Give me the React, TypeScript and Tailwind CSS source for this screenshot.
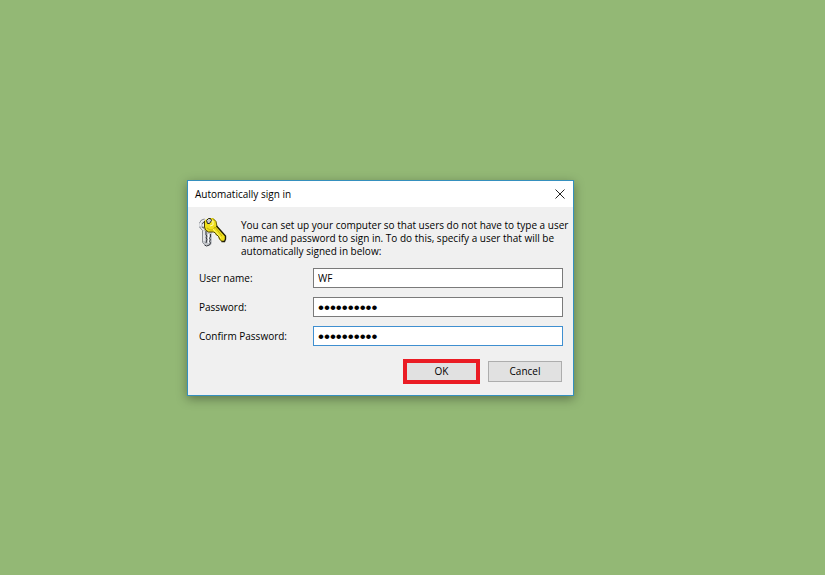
import { useState } from "react"

interface FieldProps {
  id: string
  label: string
  type?: "text" | "password"
  defaultValue: string
  active?: boolean
}

function Field({ id, label, type = "text", defaultValue, active = false }: FieldProps) {
  return (
    <div className="grid grid-cols-[114px_1fr] items-center">
      <label htmlFor={id} className="pt-0.5">
        {label}
      </label>
      <input
        id={id}
        type={type}
        defaultValue={defaultValue}
        className={`h-5 w-full border bg-white px-1 outline-none ${
          active ? "border-[#3f8fd0]" : "border-[#7a7a7a]"
        } ${type === "password" ? "pt-0.5 font-['Liberation_Sans',sans-serif] text-[17px]" : "text-[10px]"}`}
      />
    </div>
  )
}

function KeysIcon() {
  return (
    <svg width="30" height="30" viewBox="1 0 30 30" aria-hidden="true">
      {/* silver keys */}
      <path d="M6 2 3 3 1 6v4l3 3 1 1v12l2 2 3 1 3-1 1-2V14l-3-9z" fill="#c3c6cb" />
      <path d="M2 9l1-4 3-2M3 11l3 2M7 6L5 9" stroke="#f1f2f4" strokeWidth="1.4" fill="none" />
      <path d="M1.500 6l2-3 3-1M1.500 10l3 3.500v12l2 2" stroke="#8a8d93" strokeWidth="1" fill="none" />
      <path d="M4 7l2-2M4 10l2 1" stroke="#5a5d63" strokeWidth="1" fill="none" />
      <path d="M6 14v10M10.500 17v9" stroke="#f7f8fa" strokeWidth="1.2" fill="none" />
      <path d="M8 14v4l1 1-1 2 1 1-1 4M12.500 17v3l-1 1 1 2-1 1 1 2-1 2-3 1-2-1" stroke="#34373d" strokeWidth="1" fill="none" />
      {/* gold key */}
      <path d="M7 3l4-2h4l3 3 1 5 8 9v4l-1 2h-3l-2-2-1-3-2-1-1-2-2-1h-5l-3-2-1-4z" fill="#f0e01c" />
      <path d="M15 1.500l3 3 1 5" stroke="#6b5f05" strokeWidth="1" fill="none" />
      <path d="M18.500 9l9 10v3l-1 2.500h-3" stroke="#1f1c05" strokeWidth="1.4" fill="none" />
      <path d="M6.500 4v6l1 3 3 2h5l2 1 1 2 2 1 1 3 3 3" stroke="#4a4104" strokeWidth="1" fill="none" />
      <path d="M9 11l3 2h3l2-3 7 9" stroke="#c2ae0a" strokeWidth="1" fill="none" />
      <path d="M12 4h3v4l-3 1" stroke="#fffcb4" strokeWidth="1" fill="none" />
      <path d="M15 12l8 9" stroke="#fffa6a" strokeWidth="1" fill="none" />
      <path d="M8.500 3.500l2-2h2l1 2-2 3h-2z" fill="#c9cbd0" stroke="#222" strokeWidth="1" />
    </svg>
  )
}

export default function App() {
  const [open, setOpen] = useState(true)
  const close = () => setOpen(false)

  return (
    <main className="flex min-h-screen items-center justify-center bg-[#93b875] pr-16 font-['Open_Sans',sans-serif] text-[10px] leading-[13px] text-black">
      {open && (
        <section
          role="dialog"
          aria-labelledby="dialog-title"
          className="w-full max-w-[387px] border border-[#3590be] bg-[#f0f0f0] shadow-[0_3px_10px_rgba(0,0,0,0.35)]"
        >
          <header className="flex h-[26px] items-center justify-between bg-white pr-2 pl-[7px]">
            <h1 id="dialog-title" className="pt-0.5">
              Automatically sign in
            </h1>
            <button type="button" aria-label="Close" onClick={close}>
              <svg width="10" height="10" viewBox="0 0 10 10">
                <path d="M0.5 0.5l9 9M9.5 0.5l-9 9" stroke="#222" strokeWidth="1" />
              </svg>
            </button>
          </header>

          <form
            className="pt-[10px] pr-[10px] pb-[11px] pl-[11px]"
            onSubmit={(e) => {
              e.preventDefault()
              close()
            }}
          >
            <div className="-mr-2 flex gap-3">
              <div className="shrink-0">
                <KeysIcon />
              </div>
              <p className="pt-0.5">
                You can set up your computer so that users do not have to type a user name and password to sign in. To
                do this, specify a user that will be automatically signed in below:
              </p>
            </div>

            <div className="mt-[10px] flex flex-col gap-[9px]">
              <Field id="user" label="User name:" defaultValue="WF" />
              <Field id="password" label="Password:" type="password" defaultValue="0123456789" />
              <Field id="confirm" label="Confirm Password:" type="password" defaultValue="0123456789" active />
            </div>

            <div className="mt-[13px] flex items-center justify-end gap-2 pr-px">
              <button type="submit" className="h-[25px] w-[77px] border-4 border-[#ea1c24] bg-[#e1e1e1]">
                OK
              </button>
              <button type="button" onClick={close} className="h-[21px] w-[74px] border border-[#adadad] bg-[#e1e1e1]">
                Cancel
              </button>
            </div>
          </form>
        </section>
      )}
    </main>
  )
}
